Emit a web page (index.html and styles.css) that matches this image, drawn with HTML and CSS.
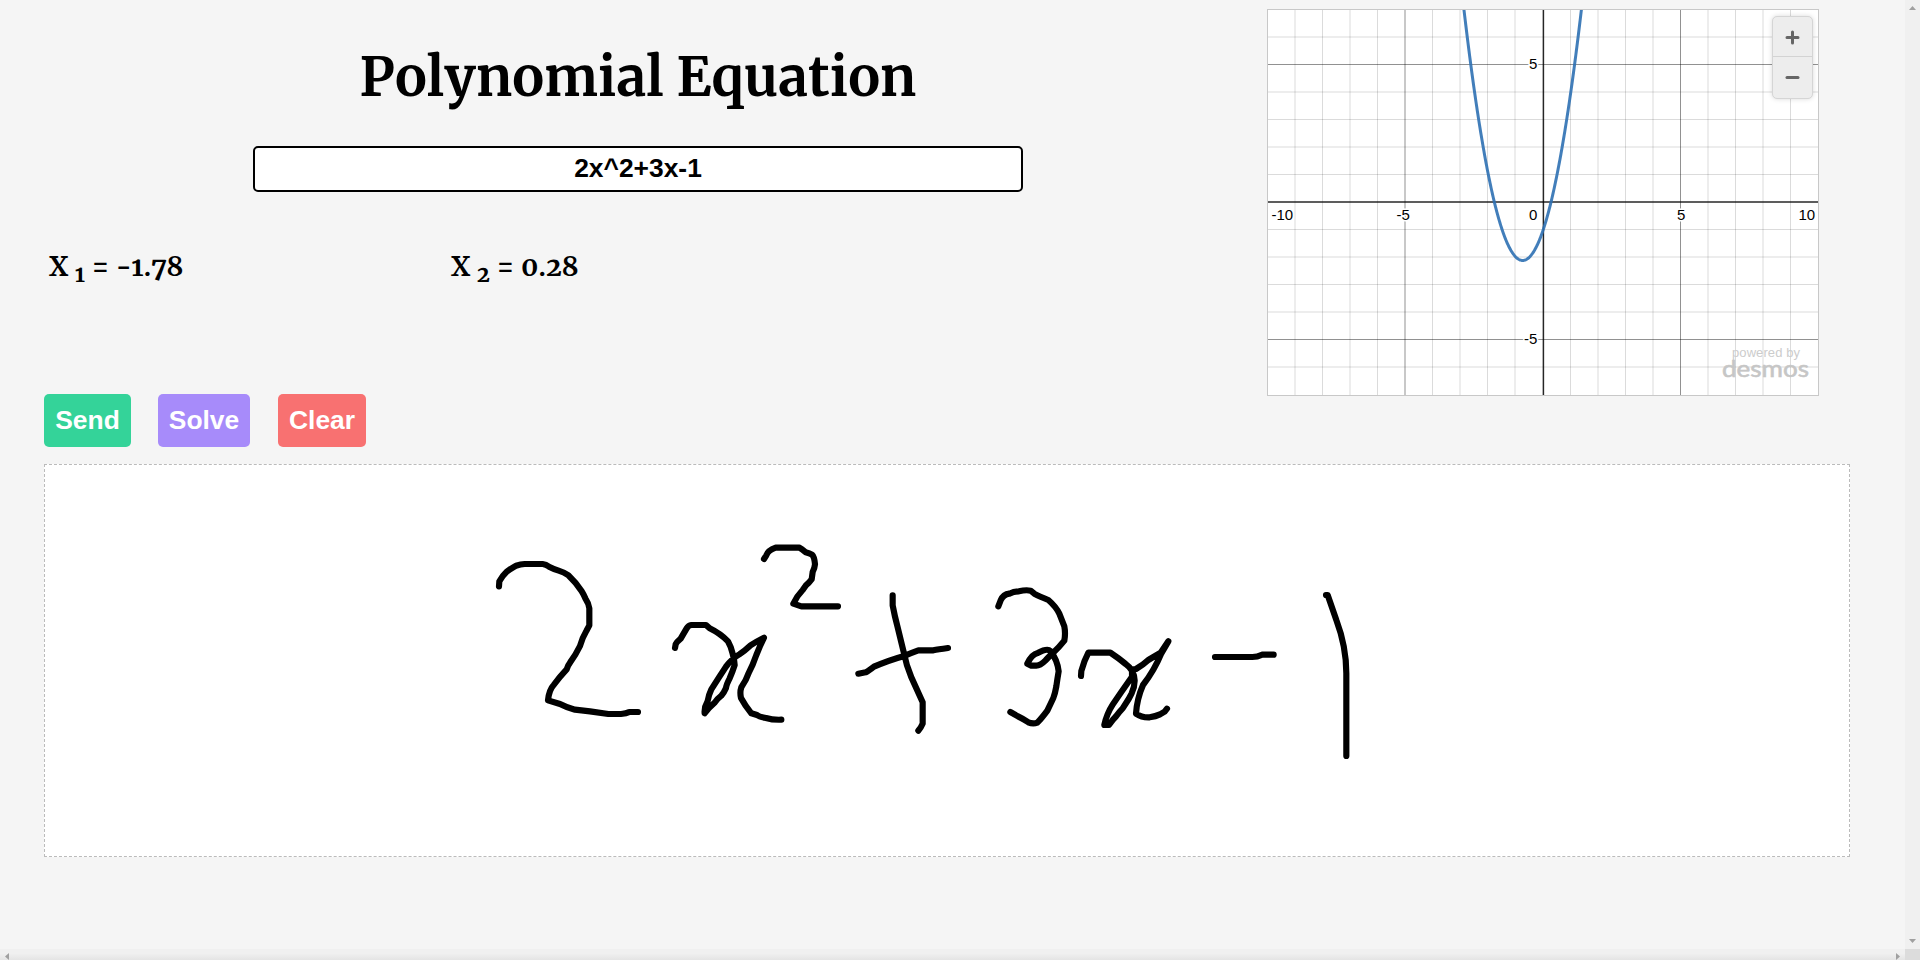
FILE: index.html
```html
<!DOCTYPE html>
<html lang="en">
<head>
<meta charset="utf-8">
<title>Polynomial Equation</title>
<link rel="stylesheet" href="styles.css">
</head>
<body>
<div class="app">
<main class="page">
  <div class="top">
    <section class="equation">
      <h1 class="title">Polynomial Equation</h1>
      <input class="field" value="2x^2+3x-1" aria-label="Equation">
      <div class="roots">
        <div class="root">X <sub>1</sub> = -1.78</div>
        <div class="root">X <sub>2</sub> = 0.28</div>
      </div>
      <div class="actions">
        <button class="btn send">Send</button>
        <button class="btn solve">Solve</button>
        <button class="btn clear">Clear</button>
      </div>
    </section>
    <section class="graph">
      <svg class="plot" width="550" height="385" viewBox="1268 10 550 385">
        <g id="grid"></g>
        <path class="axis-x" d="M1268 202H1818"/><path class="axis-y" d="M1543.4 10V395"/>
        <path id="curve" class="curve"/>
        <g class="labels">
          <text x="1271.500" y="220">-10</text><text x="1396.500" y="220">-5</text><text x="1529" y="220">0</text><text x="1677" y="220">5</text><text x="1798.500" y="220">10</text>
          <text x="1529" y="69">5</text><text x="1524" y="344">-5</text>
        </g>
        <text class="powered" x="1732" y="357" textLength="68">powered by</text>
        <text class="brand" x="1722" y="377" textLength="87" lengthAdjust="spacingAndGlyphs">desmos</text>
      </svg>
      <div class="zoom">
        <svg width="39" height="40"><path d="M14 20.500H25M19.500 15V26"/></svg>
        <svg width="39" height="41"><path d="M14 20.500H25"/></svg>
      </div>
    </section>
  </div>
  <section class="board">
    <svg width="1804" height="391" viewBox="45 465 1804 391">
      <g transform="translate(480 530) scale(.33333)">
        <path d="M57 169L58 154Q66 138 80 125Q98 112 108 107Q122 103 134 102H188Q198 103 207 110Q223 118 236 122Q252 127 265 136Q287 157 304 182Q312 195 317 207Q326 220 328 235V286L319 303Q307 323 300 348Q288 373 270 398Q264 405 260 418Q240 439 221 465Q207 480 204 511L240 522Q261 533 285 539L330 544L385 552H423Q439 551 448 546H474"/>
        <path d="M852 87L859 76Q864 61 887 53H958Q965 56 977 67Q989 70 996 74Q1003 80 1005 103Q1004 115 998 126L995 148Q988 158 977 167L968 180Q949 200 940 221L964 229H1074"/>
        <path d="M585 354L587 343Q590 336 602 326L620 295Q625 286 634 285H678L689 295Q720 310 744 334L752 351Q758 369 762 388L764 405Q758 424 749 445Q739 464 738 474Q732 488 724 497Q711 507 704 518Q685 534 674 550Q672 532 683 513Q687 492 694 478L717 442L738 410Q756 385 778 373Q793 364 812 346Q828 335 852 323L841 346L829 375L818 404L806 429Q799 450 784 472Q779 487 783 504Q794 525 814 550L831 555Q838 561 858 564Q878 570 904 569"/>
      </g>
      <g transform="translate(840 570) scale(.33333)">
        <path d="M158 76V106Q164 138 172 168L191 246Q199 287 214 322L248 397V461Q243 473 235 482M55 311L77 307Q86 303 102 290Q142 272 195 257Q218 247 235 241H280Q293 238 324 234"/>
        <path d="M475 109L482 91Q490 73 508 71Q522 64 537 64Q557 59 572 62L583 71Q599 79 625 90Q648 110 658 131Q667 154 673 169Q677 190 673 212Q657 232 641 247Q623 263 616 272Q601 287 589 287H574L562 281Q575 253 593 249Q622 234 631 243Q652 269 656 304Q652 328 649 349Q645 371 640 384Q631 403 622 422Q605 445 592 458Q579 463 565 457Q549 446 534 439L511 426"/>
        <path d="M723 318L724 303Q732 272 745 248H811Q835 264 857 282Q883 300 884 332Q884 350 875 370L866 387L848 415Q840 423 828 439L819 449L807 465H793Q800 432 818 404Q844 365 876 320V299L888 297Q910 284 925 270L962 248L985 214L964 250Q943 301 909 345Q891 386 888 431Q905 443 929 442Q947 439 960 433L974 425L981 416"/>
      </g>
      <g transform="translate(1190 570) scale(.33333)">
        <path d="M75 261H187Q202 261 216 254H251M408 75H413L439 150Q469 230 469 310V558"/>
      </g>
    </svg>
  </section>
</main>
<div class="vscroll"><svg width="15" height="949"><path d="M4 10H11L7.500 6ZM4 939H11L7.500 943Z"/></svg></div>
<div class="hscroll"><svg width="1905" height="11"><path d="M9 4V11L5 7.500ZM1896 4V11L1900 7.500Z"/></svg></div>
<div class="corner"></div>
</div>
<script src="graph.js"></script>
</body>
</html>
```
FILE: styles.css
```css
* { box-sizing: border-box; }
body { margin: 0; height: 960px; overflow: hidden; background: #f5f5f5; font-family: "Liberation Sans", Arial, sans-serif; color: #000; }
svg { display: block; }
.app { display: grid; grid-template-columns: 1905px 15px; grid-template-rows: 949px 11px; }
.page { padding: 9px 55px 0 44px; }
.top { display: flex; justify-content: space-between; height: 455px; padding-right: 31px; }
.equation { width: 1188px; }
.title { height: 137px; margin: 0; padding-top: 32px; text-align: center; font: bold 53.33px/74px Merriweather, "DejaVu Serif Condensed", serif; font-kerning: none; letter-spacing: .12px; }
.field { display: block; width: 770px; height: 46px; margin: 0 auto; padding: 0 0 2px; border: 2px solid #000; border-radius: 5px; background: #fff; text-align: center; font: bold 26.4px "Liberation Sans", Arial, sans-serif; }
.roots { display: flex; height: 202px; padding: 55px 0 0 5px; font: bold 26.67px/40px Merriweather, "Liberation Serif", serif; font-kerning: none; font-variant-ligatures: none; font-variant-numeric: oldstyle-nums; letter-spacing: .1px; }
.root { width: 402px; }
sub { position: relative; bottom: -6px; font-size: 22.2px; line-height: 0; vertical-align: baseline; }
.actions { display: flex; }
.btn { height: 53px; border: 0; border-radius: 5px; padding: 0; color: #fff; font: bold 26.4px "Liberation Sans", Arial, sans-serif; }
.send { width: 87px; background: #34d399; }
.solve { width: 92px; margin-left: 27px; background: #a78bfa; }
.clear { width: 88px; margin-left: 28px; background: #f87171; }
.graph { position: relative; width: 552px; height: 387px; border: 1px solid #c8c8c8; background: #fff; }
.minor { stroke: #000; stroke-opacity: .14; }
.major { stroke: #000; stroke-opacity: .43; }
.axis-x, .axis-y { stroke: #000; stroke-opacity: .85; stroke-width: 1.5; }
.curve { fill: none; stroke: #2d70b3; stroke-opacity: .9; stroke-width: 3; }
.labels { font-size: 15px; fill: #000; stroke: #fff; stroke-width: 3px; paint-order: stroke; }
.powered { font-size: 13px; fill: #ccc; }
.brand { font: 24px Lato, sans-serif; fill: #c6c6c6; stroke: #c6c6c6; stroke-width: .6; }
.zoom { position: absolute; top: 6px; right: 5px; width: 41px; height: 83px; border: 1px solid #d5d5d5; border-radius: 5px; background: #ededed; box-shadow: 0 0 5px rgba(0, 0, 0, .15); }
.zoom svg + svg { margin-top: -1px; border-top: 1px solid #d3d3d3; }
.zoom path { stroke: #666; stroke-width: 3; stroke-linecap: round; }
.board { width: 1806px; height: 393px; border: 1px dashed #bbb; background: #fff; }
.board path { fill: none; stroke: #000; stroke-width: 18.500; stroke-linecap: round; stroke-linejoin: round; }
.vscroll { background: #f0f0f0; }
.hscroll { background: linear-gradient(#f0f0f0 40%, #e4e4e4); }
.vscroll path, .hscroll path { fill: #a0a0a0; }
.corner { background: #dcdcdc; }
```
FILE: graph.js
```js
const origin = { x: 1543.3, y: 202 };
const unit = 27.5;
let lines = "";
for (let i = -10; i <= 10; i++) {
  if (i === 0) continue;
  const kind = i % 5 ? "minor" : "major";
  const x = Math.floor((1543 + i * 27.55) * 2) / 2;
  const y = origin.y - i * unit;
  if (Math.abs(i) < 10) lines += `<path class="${kind}" d="M${x} 10V395"/>`;
  if (Math.abs(i) < 7) lines += `<path class="${kind}" d="M1268 ${y}H1818"/>`;
}
document.getElementById("grid").innerHTML = lines;
let points = [];
for (let x = -3; x <= 1.5; x += 0.02) {
  const y = 2 * x * x + 3 * x - 1;
  points.push((origin.x + x * unit).toFixed(2) + " " + (origin.y - y * unit).toFixed(2));
}
document.getElementById("curve").setAttribute("d", "M" + points.join("L"));
```
